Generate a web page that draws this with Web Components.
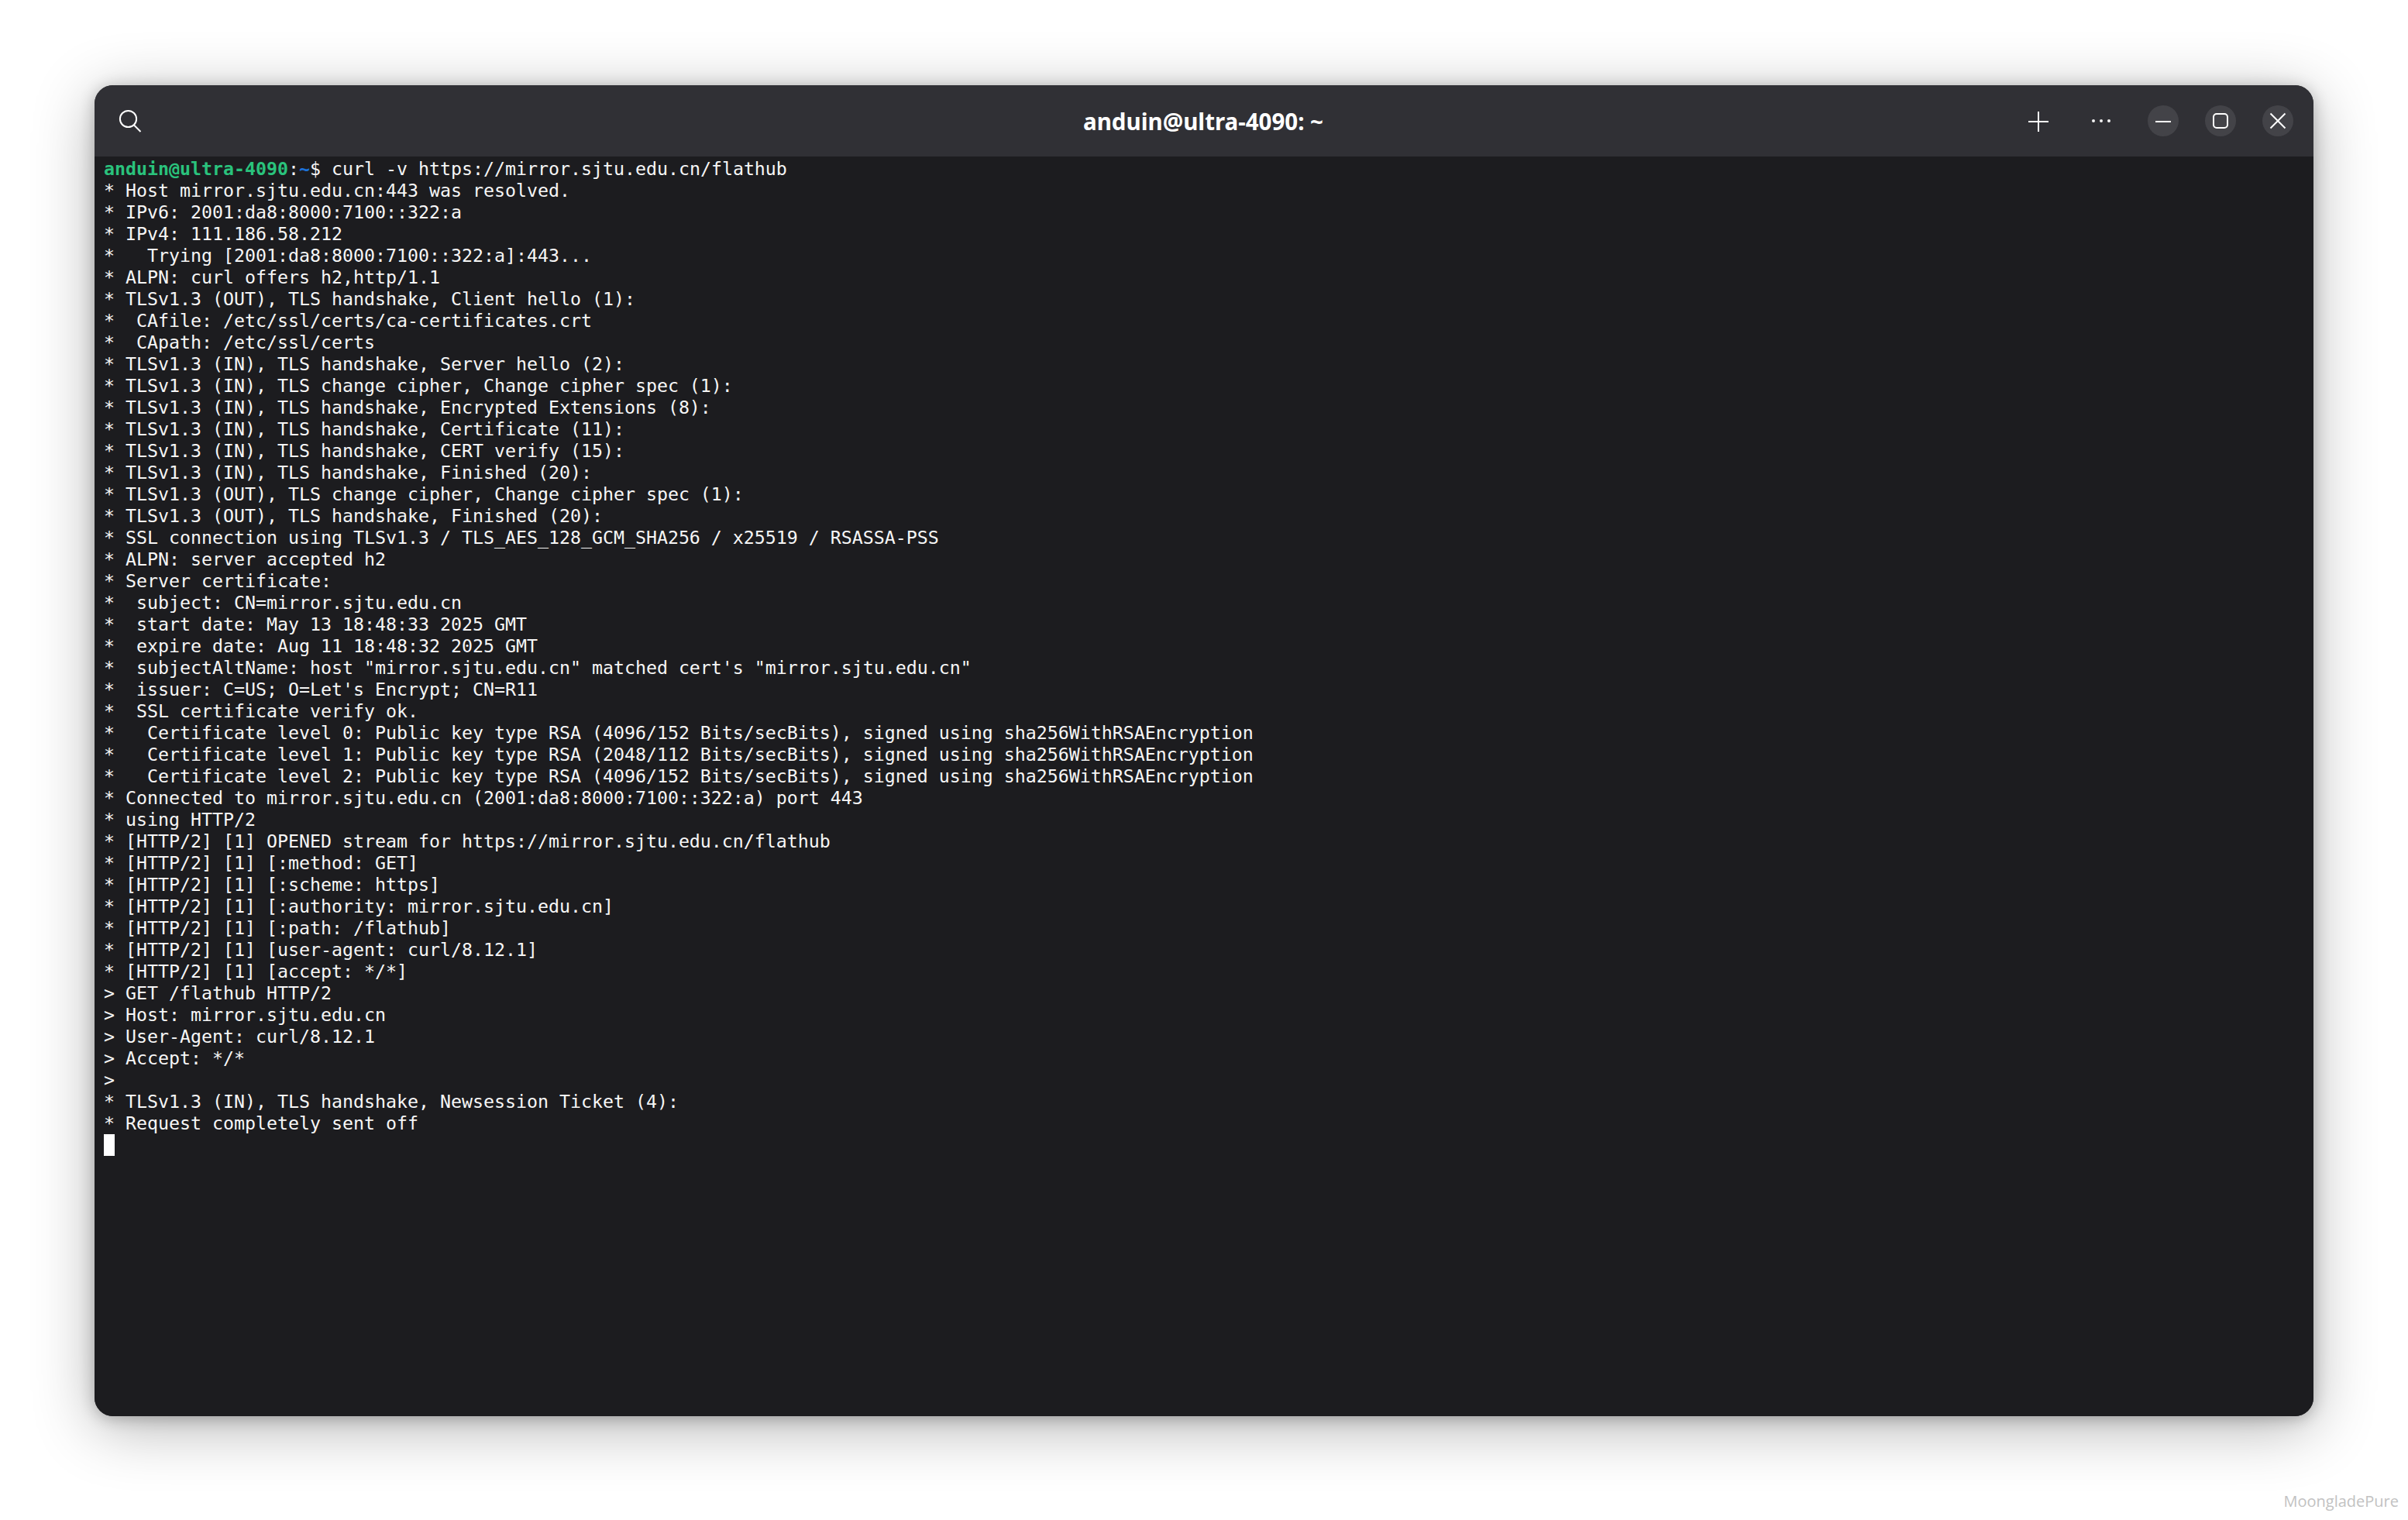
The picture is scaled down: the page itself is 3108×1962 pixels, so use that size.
<!DOCTYPE html>
<html>
<head>
<meta charset="utf-8">
<title>anduin@ultra-4090: ~</title>
<style>
  html, body { margin: 0; background: #fff; }
</style>
</head>
<body>
<desk-page>
  <terminal-window title="anduin@ultra-4090: ~"></terminal-window>
</desk-page>

<script>
const LOG = `* Host mirror.sjtu.edu.cn:443 was resolved.
* IPv6: 2001:da8:8000:7100::322:a
* IPv4: 111.186.58.212
*   Trying [2001:da8:8000:7100::322:a]:443...
* ALPN: curl offers h2,http/1.1
* TLSv1.3 (OUT), TLS handshake, Client hello (1):
*  CAfile: /etc/ssl/certs/ca-certificates.crt
*  CApath: /etc/ssl/certs
* TLSv1.3 (IN), TLS handshake, Server hello (2):
* TLSv1.3 (IN), TLS change cipher, Change cipher spec (1):
* TLSv1.3 (IN), TLS handshake, Encrypted Extensions (8):
* TLSv1.3 (IN), TLS handshake, Certificate (11):
* TLSv1.3 (IN), TLS handshake, CERT verify (15):
* TLSv1.3 (IN), TLS handshake, Finished (20):
* TLSv1.3 (OUT), TLS change cipher, Change cipher spec (1):
* TLSv1.3 (OUT), TLS handshake, Finished (20):
* SSL connection using TLSv1.3 / TLS_AES_128_GCM_SHA256 / x25519 / RSASSA-PSS
* ALPN: server accepted h2
* Server certificate:
*  subject: CN=mirror.sjtu.edu.cn
*  start date: May 13 18:48:33 2025 GMT
*  expire date: Aug 11 18:48:32 2025 GMT
*  subjectAltName: host "mirror.sjtu.edu.cn" matched cert's "mirror.sjtu.edu.cn"
*  issuer: C=US; O=Let's Encrypt; CN=R11
*  SSL certificate verify ok.
*   Certificate level 0: Public key type RSA (4096/152 Bits/secBits), signed using sha256WithRSAEncryption
*   Certificate level 1: Public key type RSA (2048/112 Bits/secBits), signed using sha256WithRSAEncryption
*   Certificate level 2: Public key type RSA (4096/152 Bits/secBits), signed using sha256WithRSAEncryption
* Connected to mirror.sjtu.edu.cn (2001:da8:8000:7100::322:a) port 443
* using HTTP/2
* [HTTP/2] [1] OPENED stream for https://mirror.sjtu.edu.cn/flathub
* [HTTP/2] [1] [:method: GET]
* [HTTP/2] [1] [:scheme: https]
* [HTTP/2] [1] [:authority: mirror.sjtu.edu.cn]
* [HTTP/2] [1] [:path: /flathub]
* [HTTP/2] [1] [user-agent: curl/8.12.1]
* [HTTP/2] [1] [accept: */*]
> GET /flathub HTTP/2
> Host: mirror.sjtu.edu.cn
> User-Agent: curl/8.12.1
> Accept: */*
>
* TLSv1.3 (IN), TLS handshake, Newsession Ticket (4):
* Request completely sent off`;

const ICONS = {
  search: '<circle cx="16.5" cy="14.5" r="10.6"/><path d="M24 22.5 L32.5 31"/>',
  plus: '<path d="M16 4 V30 M3 17 H29"/>',
  min: '<path d="M6 17 H26"/>',
  max: '<rect x="7" y="7" width="18" height="18" rx="4"/>',
  close: '<path d="M6.5 6.5 L25.5 25.5 M25.5 6.5 L6.5 25.5"/>'
};

class HeaderIcon extends HTMLElement {
  constructor() {
    super();
    this.attachShadow({ mode: 'open' });
    const name = this.getAttribute('name');
    const box = name === 'search' ? 34 : 32;
    this.shadowRoot.innerHTML = `
      <style>
        :host { display: flex; align-items: center; justify-content: center; width: 40px; height: 40px; }
        :host([round]) { border-radius: 50%; background: #434348; }
        svg { display: block; fill: none; stroke: #fff; stroke-width: 2; }
        .dots { display: flex; gap: 6px; }
        .dots i { width: 4px; height: 4px; border-radius: 50%; background: #f2f2f2; }
      </style>
      ${name === 'more'
        ? '<div class="dots"><i></i><i></i><i></i></div>'
        : `<svg width="${box}" height="${box}" viewBox="0 0 ${box} ${box}">${ICONS[name]}</svg>`}
    `;
  }
}
customElements.define('header-icon', HeaderIcon);

class TitleBar extends HTMLElement {
  constructor() {
    super();
    this.attachShadow({ mode: 'open' });
    this.shadowRoot.innerHTML = `
      <style>
        :host {
          display: grid; grid-template-columns: 1fr auto 1fr; align-items: center;
          height: 92px; padding: 0 26px 0 24px; background: #303035; color: #fff;
        }
        .title { font: 700 29.5px "Noto Sans", "Open Sans", sans-serif; }
        .right { display: flex; align-items: center; justify-content: flex-end; gap: 34px; }
        .new { margin-right: 7px; }
        .more { margin-right: 6px; }
      </style>
      <div><header-icon name="search"></header-icon></div>
      <div class="title"><slot></slot></div>
      <div class="right">
        <header-icon class="new" name="plus"></header-icon>
        <header-icon class="more" name="more"></header-icon>
        <header-icon name="min" round></header-icon>
        <header-icon name="max" round></header-icon>
        <header-icon name="close" round></header-icon>
      </div>
    `;
  }
}
customElements.define('title-bar', TitleBar);

class TerminalScreen extends HTMLElement {
  constructor() {
    super();
    this.attachShadow({ mode: 'open' });
    const rows = LOG.split('\n').map(l => {
      const d = document.createElement('div');
      d.className = 'row';
      d.textContent = l;
      return d.outerHTML;
    }).join('');
    this.shadowRoot.innerHTML = `
      <style>
        :host {
          display: block; flex: 1; background: #1c1c1f; color: #f6f6f6;
          padding: 2px 12px 0;
          font: 23.25px/28px "DejaVu Sans Mono", "Liberation Mono", monospace;
        }
        .row { height: 28px; white-space: pre; }
        .user { color: #2ac27c; font-weight: 700; }
        .path { color: #1c71d8; font-weight: 700; }
        .cursor { width: 14px; height: 28px; background: #fff; }
      </style>
      <div class="row"><span class="user">anduin@ultra-4090</span>:<span class="path">~</span>$ curl -v https://mirror.sjtu.edu.cn/flathub</div>
      ${rows}
      <div class="cursor"></div>
    `;
  }
}
customElements.define('terminal-screen', TerminalScreen);

class TerminalWindow extends HTMLElement {
  constructor() {
    super();
    this.attachShadow({ mode: 'open' });
    this.shadowRoot.innerHTML = `
      <style>
        :host {
          display: flex; flex-direction: column;
          width: 2864px; height: 1718px; overflow: hidden;
          border-radius: 24px; background: #1c1c1f;
          box-shadow: 0 0 0 1px rgba(255,255,255,.03), 0 14px 80px rgba(0,0,0,.3), 0 3px 20px rgba(0,0,0,.24);
        }
      </style>
      <title-bar>${this.getAttribute('title')}</title-bar>
      <terminal-screen></terminal-screen>
    `;
  }
}
customElements.define('terminal-window', TerminalWindow);

class DeskPage extends HTMLElement {
  constructor() {
    super();
    this.attachShadow({ mode: 'open' });
    this.shadowRoot.innerHTML = `
      <style>
        :host { display: block; position: relative; box-sizing: border-box; width: 3108px; height: 1962px; padding: 110px 122px 0; background: #fff; overflow: hidden; }
        .mark { position: absolute; right: 12px; bottom: 11px; font: 400 20px "Open Sans", "Noto Sans", sans-serif; color: #c2c2c2; }
      </style>
      <slot></slot>
      <div class="mark">MoongladePure</div>
    `;
  }
}
customElements.define('desk-page', DeskPage);
</script>
</body>
</html>
